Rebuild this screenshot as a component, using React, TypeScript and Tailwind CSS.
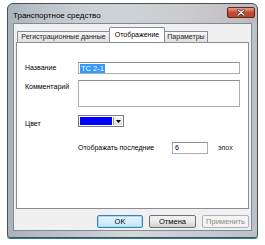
import React from "react";

const FONT = { fontFamily: '"Liberation Sans", Arial, sans-serif' };

function Tab({ label, width, active }: { label: string; width: string; active?: boolean }) {
  if (active) {
    return (
      <div className={`${width} relative z-10 -mb-px h-[15px] bg-white border border-b-0 border-[#898c95] flex items-center justify-center text-[7px] text-black rounded-t-[2px] -mx-px`}>
        {label}
      </div>
    );
  }
  return (
    <div className={`${width} h-[11px] mt-[4px] bg-gradient-to-b from-[#f6f6f6] to-[#e1e1e1] border border-b-0 border-[#898c95] flex items-center justify-center text-[7px] text-[#222] rounded-t-[1px]`}>
      {label}
    </div>
  );
}

function Button({ label, variant }: { label: string; variant?: "default" | "disabled" }) {
  if (variant === "default") {
    return (
      <div className="w-[46px] h-[13px] rounded-[2px] border border-[#3c7fb1] bg-gradient-to-b from-[#eaf6fd] to-[#bee6fd] flex items-center justify-center text-[7.5px] text-black shadow-[inset_0_0_0_1px_#a6d9f4]">
        {label}
      </div>
    );
  }
  if (variant === "disabled") {
    return (
      <div className="w-[47px] h-[13px] rounded-[2px] border border-[#adb2b5] bg-[#f4f4f4] flex items-center justify-center text-[7.5px] text-[#8a8a8a]">
        {label}
      </div>
    );
  }
  return (
    <div className="w-[47px] h-[13px] rounded-[2px] border border-[#707070] bg-gradient-to-b from-[#f2f2f2] via-[#ebebeb] to-[#cfcfcf] flex items-center justify-center text-[7.5px] text-black">
      {label}
    </div>
  );
}

export default function App() {
  return (
    <div className="w-[265px] h-[245px] bg-white pt-[3px] pl-[7px] overflow-hidden" style={FONT}>
      {/* window */}
      <div className="w-[251px] h-[235px] rounded-t-[6px] rounded-b-[3px] border border-[#4a5058] bg-gradient-to-r from-[#a9b3bb] via-[#d3d8dc] to-[#b9c2c9] flex flex-col px-[5px] pb-[6px] shadow-[0_1px_0_#2c7d8c]">
        {/* title bar */}
        <div className="h-[20px] flex justify-between bg-gradient-to-r from-transparent via-[#cdd2d6] to-[#c9a9a6]/40 -mx-[5px] px-[5px] rounded-t-[6px]">
          <span className="text-[8px] text-black pt-[6px]">Транспортное средство</span>
          <div className="mt-[3px] mr-[-3px] w-[28px] h-[11px] rounded-[2px] border border-[#5a2a22] bg-gradient-to-b from-[#e4a08e] via-[#c94a32] to-[#b8452e] flex items-center justify-center">
            <svg width="8" height="7" viewBox="0 0 8 7">
              <path d="M1 1 L7 6 M7 1 L1 6" stroke="#3a1a14" strokeWidth="2.4" strokeLinecap="round" />
              <path d="M1 1 L7 6 M7 1 L1 6" stroke="#ffffff" strokeWidth="1.4" strokeLinecap="round" />
            </svg>
          </div>
        </div>

        {/* client */}
        <div className="flex-1 bg-[#f0f0f0] border border-[#7e8a94] flex flex-col px-[2px] pt-[3px] pb-[2px]">
          {/* tabs */}
          <div className="flex items-start pl-[1px] h-[15px]">
            <Tab label="Регистрационные данные" width="w-[93px]" />
            <Tab label="Отображение" width="w-[56px]" active />
            <Tab label="Параметры" width="w-[44px]" />
          </div>
          {/* panel */}
          <div className="h-[167px] bg-white border border-[#898c95] flex flex-col pl-[8px] pr-[8px] pt-[19px] text-[7px] text-black">
            <div className="flex items-center h-[12px]">
              <span className="w-[53px]">Название</span>
              <div className="flex-1 h-[12px] border border-[#abadb3] border-t-[#8b8e96] bg-white flex items-center pl-[1px]">
                <span className="bg-[#3399ff] text-white text-[7.5px] leading-[9px] px-[1px]">ТС 2-1</span>
              </div>
            </div>
            <div className="flex mt-[6px]">
              <span className="w-[53px] mt-[2px]">Комментарий</span>
              <div className="flex-1 h-[27px] border border-[#abadb3] border-t-[#8b8e96] bg-white" />
            </div>
            <div className="flex items-center mt-[8px] h-[12px]">
              <span className="w-[53px] mt-[6px]">Цвет</span>
              <div className="w-[46px] h-[12px] border border-[#7a7a7a] bg-white flex p-px gap-px">
                <div className="w-[32px] h-full bg-[#0000ff]" />
                <div className="flex-1 h-full bg-gradient-to-b from-[#f4f4f4] to-[#dcdcdc] border-l border-[#9a9a9a] flex items-center justify-center">
                  <svg width="5" height="3" viewBox="0 0 5 3">
                    <path d="M0 0 L5 0 L2.5 3 Z" fill="#000" />
                  </svg>
                </div>
              </div>
            </div>
            <div className="flex items-center mt-[15px] h-[12px] pl-[53px]">
              <span className="w-[94px]">Отображать последние</span>
              <div className="w-[36px] h-[12px] border border-[#abadb3] border-t-[#8b8e96] bg-white flex items-center pl-[2px]">
                6
              </div>
              <span className="ml-[10px] text-[#222]">эпох</span>
            </div>
          </div>
          {/* buttons */}
          <div className="flex justify-end gap-[6px] mt-[6px]">
            <Button label="OK" variant="default" />
            <Button label="Отмена" />
            <Button label="Применить" variant="disabled" />
          </div>
        </div>
      </div>
    </div>
  );
}
